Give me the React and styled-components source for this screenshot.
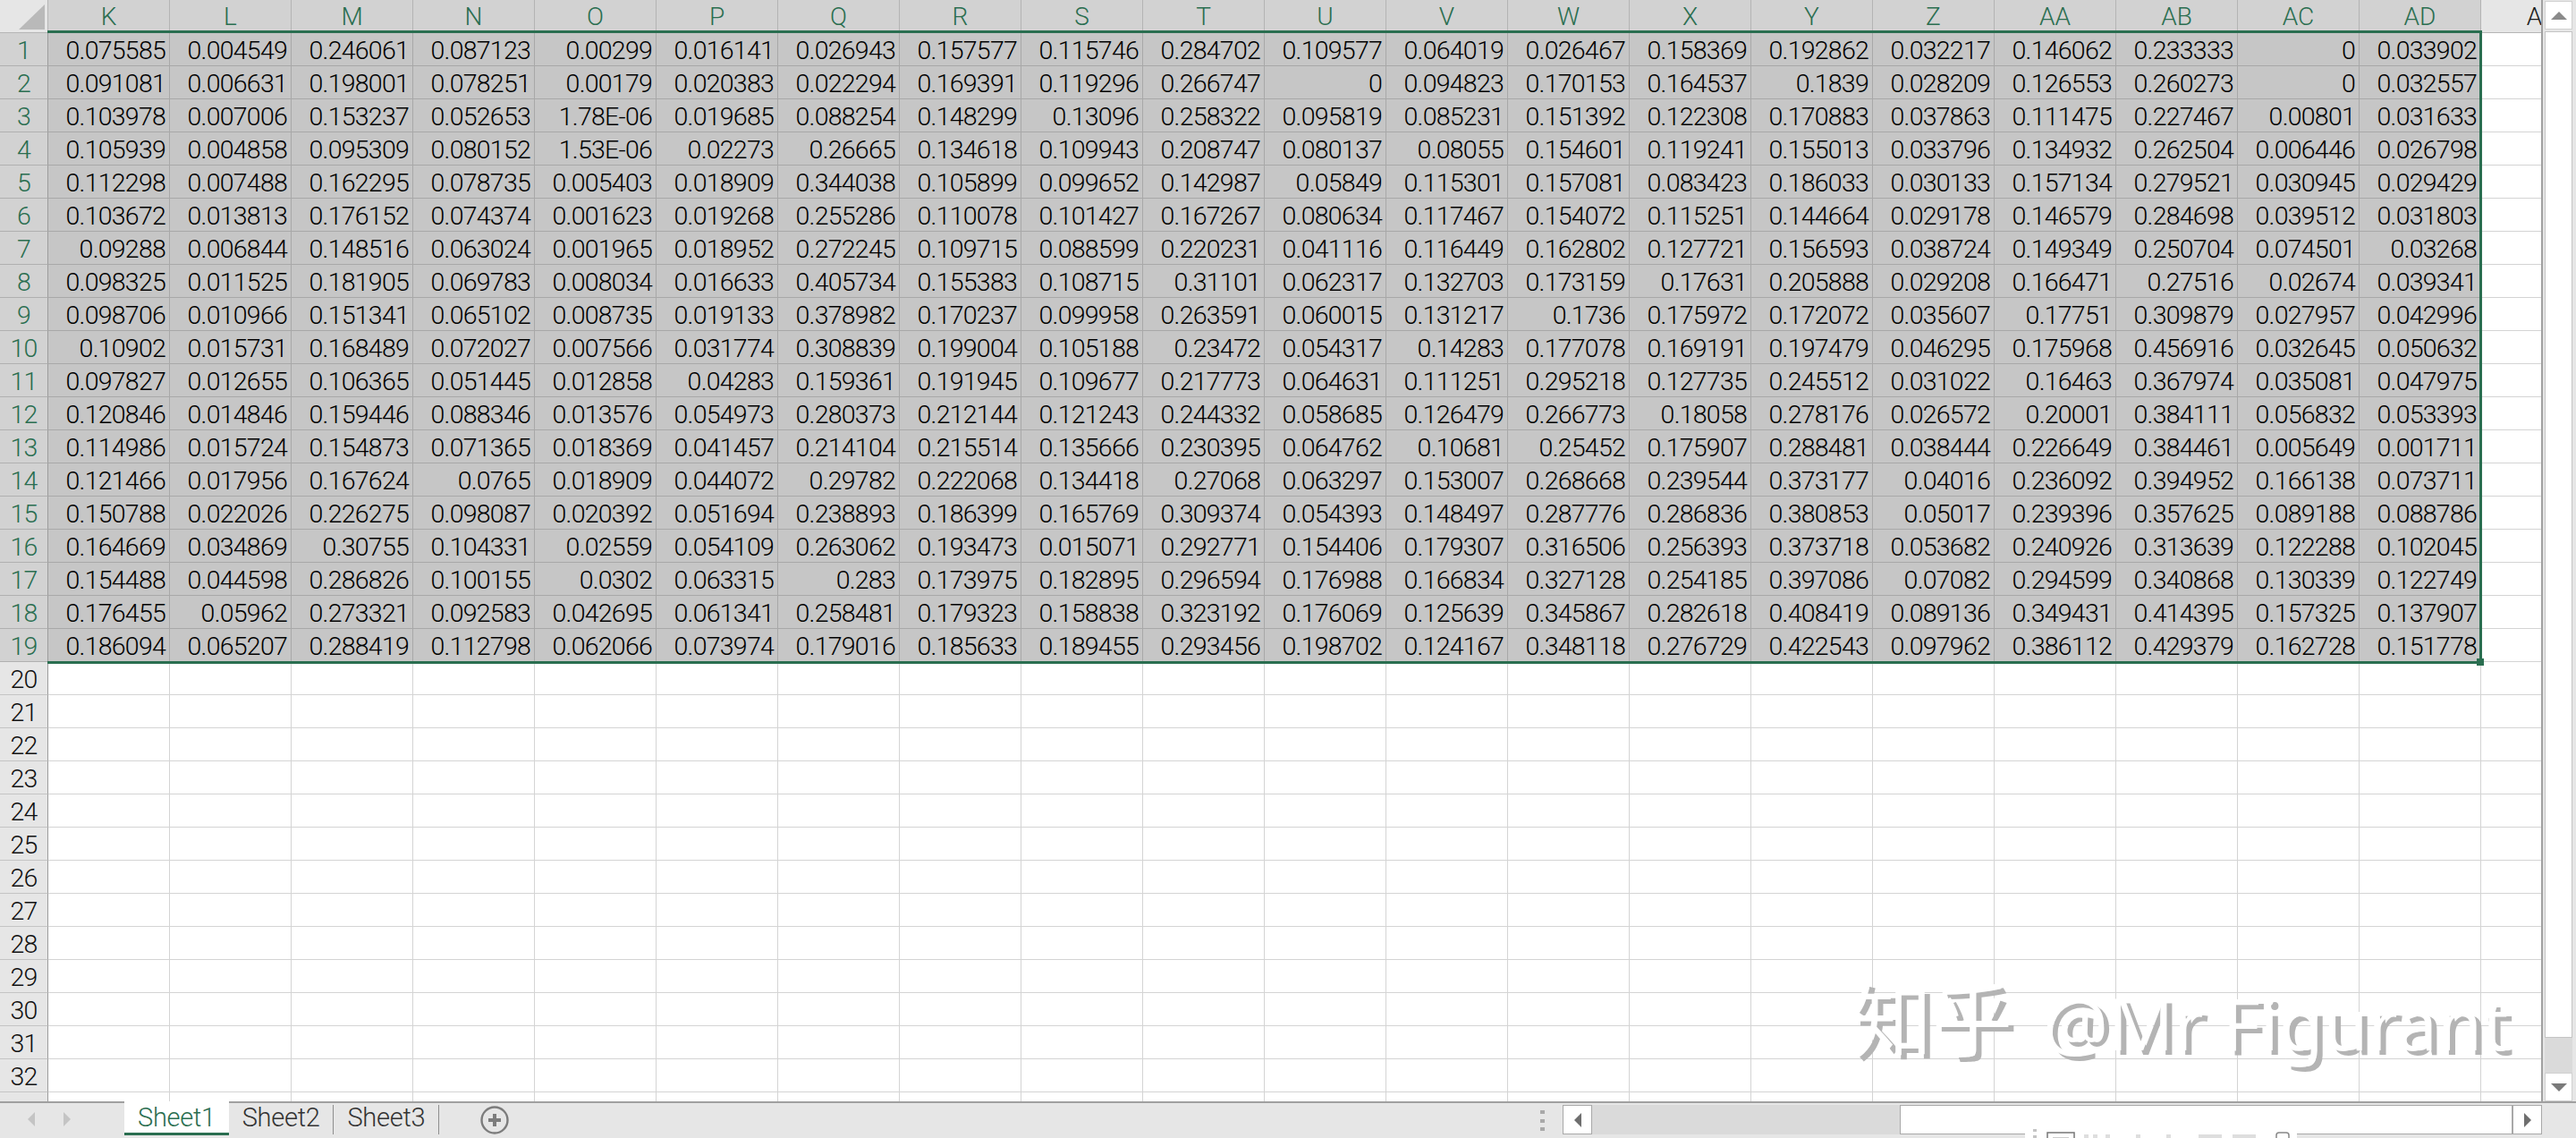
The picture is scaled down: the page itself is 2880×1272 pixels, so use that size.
import React from 'react';
import styled, { createGlobalStyle } from 'styled-components';

const GREEN = '#2a6e50';

const GlobalStyle = createGlobalStyle`
    html, body {
        margin: 0;
        padding: 0;
        background: #e6e6e6;
    }
`

const columns = ['K','L','M','N','O','P','Q','R','S','T','U','V','W','X','Y','Z','AA','AB','AC','AD'];

const data = [
    '0.075585 0.004549 0.246061 0.087123 0.00299 0.016141 0.026943 0.157577 0.115746 0.284702 0.109577 0.064019 0.026467 0.158369 0.192862 0.032217 0.146062 0.233333 0 0.033902',
    '0.091081 0.006631 0.198001 0.078251 0.00179 0.020383 0.022294 0.169391 0.119296 0.266747 0 0.094823 0.170153 0.164537 0.1839 0.028209 0.126553 0.260273 0 0.032557',
    '0.103978 0.007006 0.153237 0.052653 1.78E-06 0.019685 0.088254 0.148299 0.13096 0.258322 0.095819 0.085231 0.151392 0.122308 0.170883 0.037863 0.111475 0.227467 0.00801 0.031633',
    '0.105939 0.004858 0.095309 0.080152 1.53E-06 0.02273 0.26665 0.134618 0.109943 0.208747 0.080137 0.08055 0.154601 0.119241 0.155013 0.033796 0.134932 0.262504 0.006446 0.026798',
    '0.112298 0.007488 0.162295 0.078735 0.005403 0.018909 0.344038 0.105899 0.099652 0.142987 0.05849 0.115301 0.157081 0.083423 0.186033 0.030133 0.157134 0.279521 0.030945 0.029429',
    '0.103672 0.013813 0.176152 0.074374 0.001623 0.019268 0.255286 0.110078 0.101427 0.167267 0.080634 0.117467 0.154072 0.115251 0.144664 0.029178 0.146579 0.284698 0.039512 0.031803',
    '0.09288 0.006844 0.148516 0.063024 0.001965 0.018952 0.272245 0.109715 0.088599 0.220231 0.041116 0.116449 0.162802 0.127721 0.156593 0.038724 0.149349 0.250704 0.074501 0.03268',
    '0.098325 0.011525 0.181905 0.069783 0.008034 0.016633 0.405734 0.155383 0.108715 0.31101 0.062317 0.132703 0.173159 0.17631 0.205888 0.029208 0.166471 0.27516 0.02674 0.039341',
    '0.098706 0.010966 0.151341 0.065102 0.008735 0.019133 0.378982 0.170237 0.099958 0.263591 0.060015 0.131217 0.1736 0.175972 0.172072 0.035607 0.17751 0.309879 0.027957 0.042996',
    '0.10902 0.015731 0.168489 0.072027 0.007566 0.031774 0.308839 0.199004 0.105188 0.23472 0.054317 0.14283 0.177078 0.169191 0.197479 0.046295 0.175968 0.456916 0.032645 0.050632',
    '0.097827 0.012655 0.106365 0.051445 0.012858 0.04283 0.159361 0.191945 0.109677 0.217773 0.064631 0.111251 0.295218 0.127735 0.245512 0.031022 0.16463 0.367974 0.035081 0.047975',
    '0.120846 0.014846 0.159446 0.088346 0.013576 0.054973 0.280373 0.212144 0.121243 0.244332 0.058685 0.126479 0.266773 0.18058 0.278176 0.026572 0.20001 0.384111 0.056832 0.053393',
    '0.114986 0.015724 0.154873 0.071365 0.018369 0.041457 0.214104 0.215514 0.135666 0.230395 0.064762 0.10681 0.25452 0.175907 0.288481 0.038444 0.226649 0.384461 0.005649 0.001711',
    '0.121466 0.017956 0.167624 0.0765 0.018909 0.044072 0.29782 0.222068 0.134418 0.27068 0.063297 0.153007 0.268668 0.239544 0.373177 0.04016 0.236092 0.394952 0.166138 0.073711',
    '0.150788 0.022026 0.226275 0.098087 0.020392 0.051694 0.238893 0.186399 0.165769 0.309374 0.054393 0.148497 0.287776 0.286836 0.380853 0.05017 0.239396 0.357625 0.089188 0.088786',
    '0.164669 0.034869 0.30755 0.104331 0.02559 0.054109 0.263062 0.193473 0.015071 0.292771 0.154406 0.179307 0.316506 0.256393 0.373718 0.053682 0.240926 0.313639 0.122288 0.102045',
    '0.154488 0.044598 0.286826 0.100155 0.0302 0.063315 0.283 0.173975 0.182895 0.296594 0.176988 0.166834 0.327128 0.254185 0.397086 0.07082 0.294599 0.340868 0.130339 0.122749',
    '0.176455 0.05962 0.273321 0.092583 0.042695 0.061341 0.258481 0.179323 0.158838 0.323192 0.176069 0.125639 0.345867 0.282618 0.408419 0.089136 0.349431 0.414395 0.157325 0.137907',
    '0.186094 0.065207 0.288419 0.112798 0.062066 0.073974 0.179016 0.185633 0.189455 0.293456 0.198702 0.124167 0.348118 0.276729 0.422543 0.097962 0.386112 0.429379 0.162728 0.151778',
].map(row => row.split(' '));

const Window = styled.div`
    width: 2880px;
    height: 1272px;
    display: flex;
    flex-direction: column;
    overflow: hidden;
    position: relative;
    background: #e6e6e6;
    font-family: Roboto, "Liberation Sans", Arial, sans-serif;
    font-weight: 300;
`

const Main = styled.div`
    display: flex;
    height: 1231px;
`

const Sheet = styled.div`
    position: relative;
    width: 2841px;
    height: 1231px;
    overflow: hidden;
    flex: none;
    display: grid;
    grid-template-columns: 54px repeat(21, 136px);
    grid-auto-rows: 37px;
    background: white;
`

const Corner = styled.div`
    background: #e6e6e6;
    border-right: 1px solid #b5b5b5;
    border-bottom: 1px solid #b5b5b5;
    position: relative;
    &::after {
        content: "";
        position: absolute;
        right: 3px;
        bottom: 3px;
        border-style: solid;
        border-width: 0 0 28px 29px;
        border-color: transparent transparent #b9b9b9 transparent;
    }
`

const ColHeader = styled.div`
    background: ${p => p.$selected ? '#d2d2d2' : '#e6e6e6'};
    color: ${p => p.$selected ? GREEN : '#1c1c1c'};
    border-right: 1px solid ${p => p.$selected ? '#b4b4b4' : '#c8c8c8'};
    border-bottom: 1px solid #b5b5b5;
    font-size: 28px;
    line-height: 38px;
    text-align: center;
`

const RowHeader = styled.div`
    background: ${p => p.$selected ? '#d2d2d2' : '#e6e6e6'};
    color: ${p => p.$selected ? GREEN : '#111'};
    border-right: 1px solid #9c9c9c;
    border-bottom: 1px solid ${p => p.$selected ? '#b0b0b0' : '#c4c4c4'};
    font-size: 28.5px;
    letter-spacing: -0.8px;
    line-height: 40px;
    text-align: center;
`

const Cell = styled.div`
    background: ${p => p.$selected ? '#c6c6c6' : 'white'};
    color: #000;
    border-right: 1px solid ${p => p.$selected ? '#a8a8a8' : '#d4d4d4'};
    border-bottom: 1px solid ${p => p.$selected ? '#a8a8a8' : '#d4d4d4'};
    font-size: 28.5px;
    letter-spacing: -0.75px;
    line-height: 40px;
    text-align: right;
    padding-right: 4px;
    overflow: hidden;
    white-space: nowrap;
`

const Selection = styled.div`
    position: absolute;
    left: 53px;
    top: 34px;
    width: 2722px;
    height: 708px;
    box-sizing: border-box;
    border: solid ${GREEN};
    border-width: 3px 3px 3px 0;
    pointer-events: none;
`

const FillHandle = styled.div`
    position: absolute;
    right: -5px;
    bottom: -5px;
    width: 8px;
    height: 8px;
    background: ${GREEN};
`

const Watermark = styled.div`
    position: absolute;
    left: 2070px;
    top: 1084px;
    display: flex;
    align-items: baseline;
    gap: 34px;
    color: white;
    font-family: "Noto Sans", "Noto Sans CJK SC", sans-serif;
    font-weight: 400;
    line-height: 110px;
    white-space: nowrap;
    text-shadow: 6px 5px 0 #b4b4b4;
    pointer-events: none;
`

const WatermarkCjk = styled.span`
    font-size: 90px;
`

const WatermarkName = styled.span`
    font-size: 81px;
`

const VScroll = styled.div`
    flex: 1;
    border-left: 2px solid #a0a0a0;
    padding: 1px 4px 0 2px;
    display: flex;
    flex-direction: column;
    height: 1231px;
    box-sizing: border-box;
`

const ScrollButton = styled.div`
    background: white;
    display: flex;
    align-items: center;
    justify-content: center;
    flex: none;
    box-sizing: border-box;
    ${p => p.$vertical ? 'height: 32px; border: 1px solid #d0d0d0;' : 'width: 33px; height: 100%; border: 1px solid #a8a8a8;'}
`

const VThumb = styled.div`
    height: 1125px;
    margin-top: 2px;
    background: white;
    border: 1px solid #c4c4c4;
    box-sizing: border-box;
    flex: none;
`

const VTrack = styled.div`
    flex: 1;
    background: #dadada;
`

const Footer = styled.div`
    flex: 1;
    position: relative;
    display: flex;
    align-items: flex-start;
    background: #e6e6e6;
    border-top: 2px solid #a0a0a0;
    box-sizing: border-box;
`

const SheetNav = styled.div`
    width: 139px;
    height: 36px;
    display: flex;
    align-items: center;
    gap: 32px;
    padding-left: 31px;
    box-sizing: border-box;
    flex: none;
`

const Tab = styled.div`
    box-sizing: border-box;
    flex: none;
    font-size: 29px;
    letter-spacing: -0.3px;
    line-height: 33px;
    padding: 0 15px;
    white-space: nowrap;
    background: ${p => p.$active ? 'white' : 'transparent'};
    color: ${p => p.$active ? GREEN : '#333'};
    border-bottom: ${p => p.$active ? `3px solid ${GREEN}` : 'none'};
    margin-top: ${p => p.$active ? '-2px' : '0'};
    padding-top: ${p => p.$active ? '2px' : '0'};
    height: ${p => p.$active ? '38px' : '36px'};
`

const TabDivider = styled.div`
    width: 1px;
    height: 33px;
    margin-top: 2px;
    background: #8e8e8e;
    flex: none;
`

const AddSheet = styled.div`
    margin-left: 46px;
    margin-top: 3px;
    flex: none;
    display: flex;
`

const Splitter = styled.div`
    position: absolute;
    left: 1722px;
    top: 8px;
    width: 5px;
    height: 23px;
    display: flex;
    flex-direction: column;
    justify-content: space-between;
`

const SplitterDot = styled.div`
    height: 4px;
    background: #a9a9a9;
`

const HScroll = styled.div`
    position: absolute;
    left: 1747px;
    top: 2px;
    width: 1095px;
    height: 33px;
    display: flex;
    background: #dadada;
`

const HTrack = styled.div`
    flex: none;
    width: 344px;
`

const HThumb = styled.div`
    flex: 1;
    background: white;
    border: 1px solid #a8a8a8;
    box-sizing: border-box;
`

const StatusClip = styled.svg`
    position: absolute;
    left: 2264px;
    top: 29px;
    display: block;
`

function Arrow({ dir, color, size = 12 }) {
    const points = {
        up: '0,10 10,0 20,10',
        down: '0,0 20,0 10,10',
        left: '10,0 10,20 0,10',
        right: '0,0 0,20 10,10',
    }[dir];
    const horizontal = dir === 'left' || dir === 'right';
    return (
        <svg width={horizontal ? size : size * 2} height={horizontal ? size * 2 : size} viewBox={horizontal ? '0 0 10 20' : '0 0 20 10'}>
            <polygon points={points} fill={color} />
        </svg>
    );
}

function PlusCircle() {
    return (
        <svg width="32" height="32" viewBox="0 0 32 32">
            <circle cx="16" cy="16" r="14.5" fill="none" stroke="#7c7c7c" strokeWidth="2.4" />
            <path d="M16 9 V23 M9 16 H23" stroke="#7c7c7c" strokeWidth="4" />
        </svg>
    );
}

// the status bar is cut by the bottom of the picture, only its top shows
function StatusBits() {
    const bits = [[66, 5], [76, 5], [90, 5], [124, 5], [158, 5], [194, 26], [232, 26]];
    return (
        <StatusClip width="304" height="12" viewBox="0 0 304 12">
            <rect x="0" y="5" width="304" height="7" fill="white" />
            <rect x="9" y="0" width="4" height="3" fill="#c4c4c4" />
            <rect x="9" y="7" width="4" height="3" fill="#c4c4c4" />
            <rect x="25" y="4" width="30" height="10" fill="none" stroke="#777" strokeWidth="1.5" />
            <rect x="31" y="9" width="18" height="3" fill="#ccc" />
            {bits.map(([x, w]) => <rect key={x} x={x} y="6" width={w} height="5" fill="#dedede" />)}
            <rect x="281" y="4" width="14" height="12" rx="3" fill="none" stroke="#888" strokeWidth="1.5" />
        </StatusClip>
    );
}

function App() {
    const rows = Array.from({ length: 33 }, (_, i) => i);

    return (
        <Window>
            <GlobalStyle />
            <Main>
                <Sheet>
                    <Corner />
                    {columns.map(col => <ColHeader key={col} $selected>{col}</ColHeader>)}
                    <ColHeader>AE</ColHeader>
                    {rows.map(i => (
                        <React.Fragment key={i}>
                            <RowHeader $selected={i < 19}>{i < 32 ? i + 1 : ''}</RowHeader>
                            {columns.map((col, c) => (
                                <Cell key={col} $selected={i < 19}>{i < 19 ? data[i][c] : ''}</Cell>
                            ))}
                            <Cell />
                        </React.Fragment>
                    ))}
                    <Selection>
                        <FillHandle />
                    </Selection>
                    <Watermark>
                        <WatermarkCjk>知乎</WatermarkCjk>
                        <WatermarkName>@Mr Figurant</WatermarkName>
                    </Watermark>
                </Sheet>
                <VScroll>
                    <ScrollButton $vertical><Arrow dir="up" color="#8a8a8a" size={9} /></ScrollButton>
                    <VThumb />
                    <VTrack />
                    <ScrollButton $vertical><Arrow dir="down" color="#7a7a7a" size={9} /></ScrollButton>
                </VScroll>
            </Main>
            <Footer>
                <SheetNav>
                    <Arrow dir="left" color="#c4c4c4" size={8} />
                    <Arrow dir="right" color="#c4c4c4" size={8} />
                </SheetNav>
                <Tab $active>Sheet1</Tab>
                <Tab>Sheet2</Tab>
                <TabDivider />
                <Tab>Sheet3</Tab>
                <TabDivider />
                <AddSheet><PlusCircle /></AddSheet>
                <Splitter>
                    <SplitterDot />
                    <SplitterDot />
                    <SplitterDot />
                </Splitter>
                <HScroll>
                    <ScrollButton><Arrow dir="left" color="#6e6e6e" size={8} /></ScrollButton>
                    <HTrack />
                    <HThumb />
                    <ScrollButton><Arrow dir="right" color="#6e6e6e" size={8} /></ScrollButton>
                </HScroll>
                <StatusBits />
            </Footer>
        </Window>
    )
}

export default App;
